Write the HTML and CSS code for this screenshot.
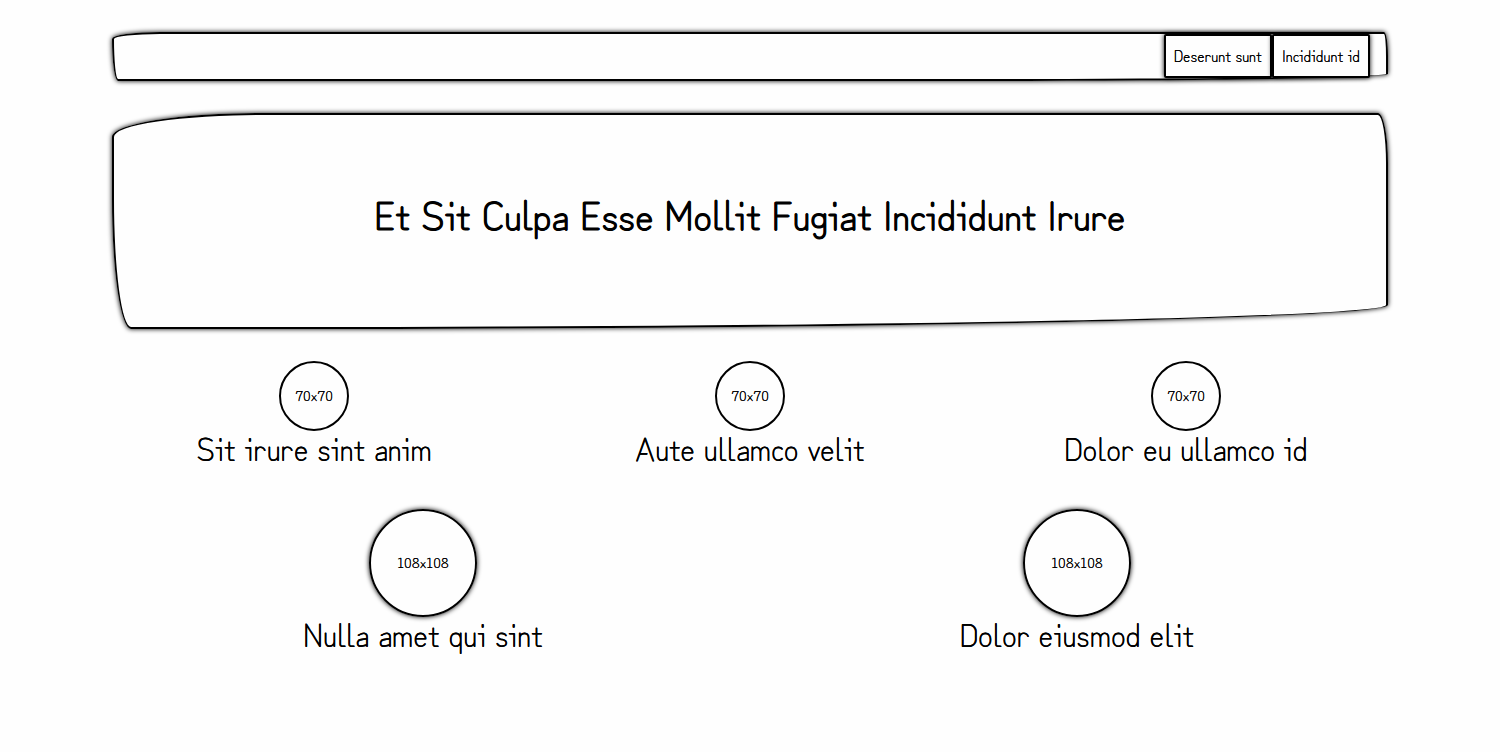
FILE: index.html
```html
<!DOCTYPE html>
<html lang="en">
<head>
<meta charset="utf-8">
<meta name="viewport" content="width=device-width, initial-scale=1">
<title>Et Sit Culpa</title>
<link rel="stylesheet" href="styles.css">
</head>
<body>
<div class="page">
  <nav class="navbar">
    <button class="nav-button" type="button">Deserunt sunt</button>
    <button class="nav-button" type="button">Incididunt id</button>
  </nav>
  <header class="hero">
    <h1 class="hero-title">Et Sit Culpa Esse Mollit Fugiat Incididunt Irure</h1>
  </header>
  <section class="row row-three">
    <div class="item"><div class="circle">70x70</div><h2 class="item-title">Sit irure sint anim</h2></div>
    <div class="item"><div class="circle">70x70</div><h2 class="item-title">Aute ullamco velit</h2></div>
    <div class="item"><div class="circle">70x70</div><h2 class="item-title">Dolor eu ullamco id</h2></div>
  </section>
  <section class="row row-two">
    <div class="item"><div class="circle circle-large">108x108</div><h2 class="item-title">Nulla amet qui sint</h2></div>
    <div class="item"><div class="circle circle-large">108x108</div><h2 class="item-title">Dolor eiusmod elit</h2></div>
  </section>
</div>
</body>
</html>
```
FILE: styles.css
```css
* {
  box-sizing: border-box;
}

body {
  margin: 0;
  background: #fefefe;
  color: #000;
  font-family: "Zen Kurenaido", Gaegu, Lato, sans-serif;
  font-size: 15px;
  line-height: 20px;
  text-shadow: 0 0 0 #000;
}

.page {
  display: flex;
  flex-direction: column;
  gap: 32px;
  max-width: 1340px;
  margin: 0 auto;
  padding: 32px;
}

.navbar {
  display: flex;
  justify-content: flex-end;
  padding: 0 16px 1px;
  border: 2px solid #000;
  border-radius: 48px 4px 400px 6px / 7px 24px 7px 42px;
  box-shadow: 0 0 5px #000;
}

.nav-button {
  padding: 9px 8px 11px;
  border: 2px solid #000;
  border-radius: 2px;
  background: #fefefe;
  box-shadow: 0 0 5px #000;
  color: inherit;
  font: inherit;
  font-size: 16px;
  text-shadow: inherit;
}

.hero {
  padding: 64px 32px 80px;
  border: 2px solid #000;
  border-radius: 150px 10px 1100px 19px / 24px 50px 24px 130px;
  box-shadow: 0 0 5px #000;
  text-align: center;
}

.hero-title {
  margin: 0;
  font-size: 40px;
  font-weight: 400;
  line-height: 68px;
  -webkit-text-stroke: 1px #000;
}

.row {
  display: grid;
  gap: 32px;
}

.row-three {
  grid-template-columns: repeat(3, 1fr);
}

.row-two {
  grid-template-columns: repeat(2, 1fr);
}

.item {
  display: flex;
  flex-direction: column;
  align-items: center;
  padding-bottom: 14px;
}

.circle {
  display: grid;
  place-items: center;
  width: 70px;
  height: 70px;
  padding-bottom: 2px;
  border: 2px solid #000;
  border-radius: 50%;
}

.circle-large {
  width: 108px;
  height: 108px;
  box-shadow: 0 0 5px #000;
}

.item-title {
  margin: 0;
  font-size: 32px;
  font-weight: 400;
  line-height: 32px;
  text-align: center;
}
```
